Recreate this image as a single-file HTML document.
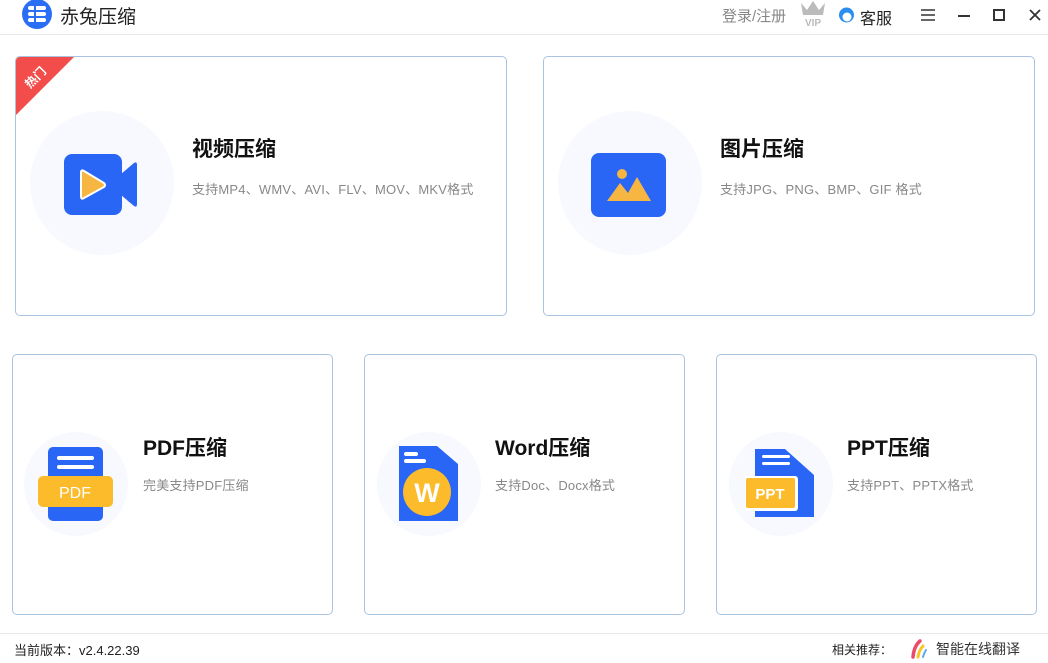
<!DOCTYPE html>
<html><head><meta charset="utf-8"><style>
*{margin:0;padding:0;box-sizing:border-box}
body{width:1048px;height:663px;background:#fff;font-family:"Liberation Sans","Noto Sans CJK SC",sans-serif;position:relative;overflow:hidden}
.a{position:absolute}
.card{position:absolute;border:1px solid #a9c3e3;border-radius:5px;background:#fff;overflow:hidden}
.circ{position:absolute;border-radius:50%;background:#f7f9fe}
.t{position:absolute;font-size:21px;font-weight:bold;color:#111;white-space:nowrap}
.s{position:absolute;font-size:13px;color:#888;white-space:nowrap;letter-spacing:0.2px}
</style></head><body>
<div class="a" style="left:0;top:34px;width:1048px;height:1px;background:#e8e8e8"></div>
<svg class="a" style="left:21px;top:0" width="32" height="30" viewBox="0 0 32 30"><circle cx="16" cy="14" r="15" fill="#2a6ef5"/><rect x="7" y="6" width="18" height="4" rx="2" fill="#fff"/><rect x="7" y="12" width="18" height="4" rx="2" fill="#fff"/><rect x="7" y="18" width="18" height="4" rx="2" fill="#fff"/><rect x="13" y="5" width="2" height="18" fill="#2a6ef5"/></svg>
<div class="a" style="left:60px;top:2px;font-size:19px;color:#222">赤兔压缩</div>
<div class="a" style="left:722px;top:5px;font-size:15px;color:#888">登录/注册</div>
<svg class="a" style="left:799px;top:0px" width="28" height="27" viewBox="0 0 28 27"><path d="M2 3 L8 10 L14 1 L20 10 L26 3 L24 15 H4Z" fill="#bbb"/><text x="14" y="26" font-size="10" font-weight="bold" fill="#bbb" text-anchor="middle" font-family="Liberation Sans">VIP</text></svg>
<svg class="a" style="left:838px;top:6px" width="17" height="18" viewBox="0 0 17 18"><circle cx="8.5" cy="9" r="7.5" fill="#2a8ef0"/><circle cx="9" cy="11" r="4.5" fill="#fff"/></svg>
<div class="a" style="left:860px;top:5px;font-size:16px;color:#222">客服</div>
<svg class="a" style="left:920px;top:8px" width="16" height="14"><path d="M1 2H15M1 7H15M1 12H15" stroke="#333" stroke-width="1.6"/></svg>
<div class="a" style="left:958px;top:15px;width:12px;height:2px;background:#333"></div>
<div class="a" style="left:993px;top:9px;width:12px;height:12px;border:2px solid #333"></div>
<svg class="a" style="left:1029px;top:9px" width="12" height="12"><path d="M1 1L11 11M11 1L1 11" stroke="#333" stroke-width="1.8"/></svg>

<div class="card" style="left:15px;top:56px;width:492px;height:260px">
<svg class="a" style="left:0;top:0" width="58" height="58"><path d="M0 0H58L0 58Z" fill="#f24d4a"/><text x="0" y="0" transform="translate(14 32) rotate(-45)" font-size="12" font-weight="bold" fill="#fff" font-family="Noto Sans CJK SC">热门</text></svg>
</div>
<div class="circ" style="left:30px;top:111px;width:144px;height:144px"></div>
<svg class="a" style="left:64px;top:154px" width="74" height="62" viewBox="0 0 74 62"><rect x="0" y="0" width="58" height="61" rx="8" fill="#2a66f5"/><path d="M57 20 L70 9 Q73 7 73 11 V50 Q73 54 70 52 L57 41Z" fill="#2a66f5"/><path d="M20 17 L40 29 Q42 31 40 33 L20 44 Q17 46 17 42 V19 Q17 15 20 17Z" fill="#f7b541" stroke="#fff" stroke-width="2"/></svg>
<div class="t" style="left:192px;top:133px">视频压缩</div>
<div class="s" style="left:192px;top:179px">支持MP4、WMV、AVI、FLV、MOV、MKV格式</div>

<div class="card" style="left:543px;top:56px;width:492px;height:260px"></div>
<div class="circ" style="left:558px;top:111px;width:144px;height:144px"></div>
<svg class="a" style="left:591px;top:153px" width="75" height="64" viewBox="0 0 75 64"><rect width="75" height="64" rx="8" fill="#2a66f5"/><circle cx="31" cy="21" r="5" fill="#f7b541"/><path d="M16 48 L29 30 L37 40 L46 24 L60 48Z" fill="#f7b541"/></svg>
<div class="t" style="left:720px;top:133px">图片压缩</div>
<div class="s" style="left:720px;top:179px">支持JPG、PNG、BMP、GIF 格式</div>

<div class="card" style="left:12px;top:354px;width:321px;height:261px"></div>
<div class="circ" style="left:24px;top:432px;width:104px;height:104px"></div>
<svg class="a" style="left:38px;top:446px" width="76" height="76" viewBox="0 0 76 76"><rect x="10" y="1" width="55" height="74" rx="5" fill="#2a66f5"/><rect x="19" y="10" width="37" height="4" rx="2" fill="#fff"/><rect x="19" y="19" width="37" height="4" rx="2" fill="#fff"/><rect x="0" y="30" width="75" height="31" rx="5" fill="#fbbb2a"/><text x="37" y="52" font-size="16" fill="#fff" text-anchor="middle" font-family="Liberation Sans">PDF</text></svg>
<div class="t" style="left:143px;top:432px">PDF压缩</div>
<div class="s" style="left:143px;top:475px">完美支持PDF压缩</div>

<div class="card" style="left:364px;top:354px;width:321px;height:261px"></div>
<div class="circ" style="left:377px;top:432px;width:104px;height:104px"></div>
<svg class="a" style="left:397px;top:445px" width="62" height="77" viewBox="0 0 62 77"><path d="M2 1 H40 L61 19 V76 H2Z" fill="#2a66f5"/><rect x="7" y="7" width="14" height="4" rx="2" fill="#fff"/><rect x="7" y="14" width="22" height="4" rx="2" fill="#fff"/><circle cx="30" cy="47" r="24" fill="#fbbb2a"/><text x="30" y="57" font-size="27" font-weight="bold" fill="#fff" text-anchor="middle" font-family="Liberation Sans">W</text></svg>
<div class="t" style="left:495px;top:432px">Word压缩</div>
<div class="s" style="left:495px;top:475px">支持Doc、Docx格式</div>

<div class="card" style="left:716px;top:354px;width:321px;height:261px"></div>
<div class="circ" style="left:729px;top:432px;width:104px;height:104px"></div>
<svg class="a" style="left:745px;top:449px" width="70" height="70" viewBox="0 0 70 70"><path d="M10 0 H40 L69 26 V68 H10Z" fill="#2a66f5"/><rect x="17" y="6" width="28" height="3" rx="1.5" fill="#fff"/><rect x="17" y="13" width="28" height="3" rx="1.5" fill="#fff"/><rect x="-1" y="27" width="54" height="35" rx="3" fill="#fff"/><rect x="1" y="29" width="49" height="30" rx="2" fill="#fbbb2a"/><text x="25" y="50" font-size="15" font-weight="bold" fill="#fff" text-anchor="middle" font-family="Liberation Sans">PPT</text></svg>
<div class="t" style="left:847px;top:432px">PPT压缩</div>
<div class="s" style="left:847px;top:475px">支持PPT、PPTX格式</div>

<div class="a" style="left:0;top:633px;width:1048px;height:1px;background:#e8e8e8"></div>
<div class="a" style="left:14px;top:640px;font-size:13px;color:#222">当前版本：v2.4.22.39</div>
<div class="a" style="left:832px;top:641px;font-size:12px;color:#222">相关推荐：</div>
<svg class="a" style="left:910px;top:639px" width="20" height="20" viewBox="0 0 20 20"><path d="M3 18 Q4 7 10 2" stroke="#ec4a6a" stroke-width="3.5" fill="none" stroke-linecap="round"/><path d="M8 18 Q9 11 13 7" stroke="#f7c42a" stroke-width="3" fill="none" stroke-linecap="round"/><path d="M13 18 Q14 14 16 11" stroke="#5aa8f0" stroke-width="2" fill="none" stroke-linecap="round"/></svg>
<div class="a" style="left:936px;top:639px;font-size:14px;color:#333">智能在线翻译</div>
</body></html>
